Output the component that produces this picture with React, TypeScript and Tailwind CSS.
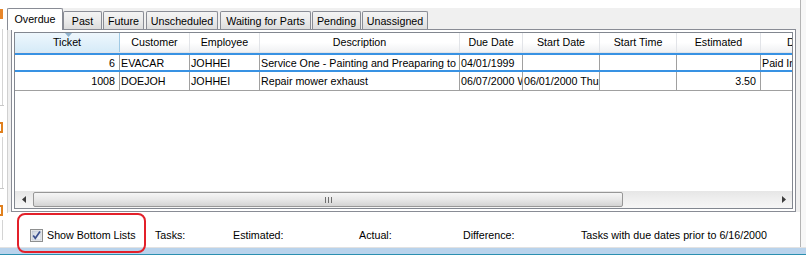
import React from "react";

type Col = { label: string; w: string; align: "left" | "right"; hdr?: string };

const cols: Col[] = [
  { label: "Ticket", w: "w-[105px]", align: "right" },
  { label: "Customer", w: "w-[70px]", align: "left" },
  { label: "Employee", w: "w-[70px]", align: "left" },
  { label: "Description", w: "w-[200px]", align: "left" },
  { label: "Due Date", w: "w-[63px]", align: "left" },
  { label: "Start Date", w: "w-[77px]", align: "left" },
  { label: "Start Time", w: "w-[77px]", align: "left" },
  { label: "Estimated", w: "w-[84px]", align: "right" },
  { label: "Difference", w: "w-[120px]", align: "left" },
];

const rows: string[][] = [
  ["6", "EVACAR", "JOHHEI", "Service One - Painting and Preaparing to paint", "04/01/1999", "", "", "", "Paid In Full"],
  ["1008", "DOEJOH", "JOHHEI", "Repair mower exhaust", "06/07/2000 Wednesday", "06/01/2000 Thursday", "", "3.50", ""],
];

const tabs = [
  { label: "Past", cls: "w-[39px] ml-0" },
  { label: "Future", cls: "w-[41px] ml-[1px]" },
  { label: "Unscheduled", cls: "w-[72px] ml-[2px]" },
  { label: "Waiting for Parts", cls: "w-[91px] ml-[2px]" },
  { label: "Pending", cls: "w-[49px] ml-[1px]" },
  { label: "Unassigned", cls: "w-[66px] ml-[1px]" },
];

function Checkbox() {
  return (
    <svg width="13" height="13" viewBox="0 0 13 13" className="shrink-0">
      <defs>
        <linearGradient id="cbg" x1="0" y1="0" x2="1" y2="1">
          <stop offset="0" stopColor="#cbd3de" />
          <stop offset="1" stopColor="#f4f6f9" />
        </linearGradient>
      </defs>
      <rect x="0.5" y="0.5" width="12" height="12" fill="#f4f4f4" stroke="#8e8f8f" />
      <rect x="2" y="2" width="9" height="9" fill="url(#cbg)" stroke="#b4bcc8" strokeWidth="0.6" />
      <path d="M3.2 6.4 L5.3 9.2 L10 2.6" fill="none" stroke="#3a4f8e" strokeWidth="1.7" />
    </svg>
  );
}

export default function App() {
  return (
    <div className="relative w-[806px] h-[262px] bg-white overflow-hidden font-['Liberation_Sans',Arial,sans-serif] text-[10.7px] text-black leading-none">
      <div className="flex h-[247px]">
        {/* left strip */}
        <div className="w-[7px] shrink-0 flex flex-col bg-white">
          <div className="h-[9px]" />
          <div className="h-[10px] w-[3px] bg-[#e8862a]" />
          <div className="mt-[10px] ml-[2px] h-[76px] w-[1px] bg-[#d4d4d4]" />
          <div className="h-[1px] w-[4px] bg-[#c8c8c8]" />
          <div className="mt-[16px] h-[11px] w-[3px] border-y-2 border-r-2 border-[#e0801e]" />
          <div className="mt-[4px] ml-[2px] h-[51px] w-[1px] bg-[#d4d4d4]" />
          <div className="h-[1px] w-[4px] bg-[#c8c8c8]" />
          <div className="mt-[16px] h-[11px] w-[3px] border-y-2 border-r-2 border-[#e0801e]" />
          <div className="mt-[4px] ml-[2px] h-[20px] w-[1px] bg-[#d4d4d4]" />
        </div>

        {/* main */}
        <div className="w-[793px] shrink-0 flex flex-col">
          <div className="h-[8px] bg-white" />
          <div className="bg-[#f0f0f0] border-l border-[#d0d0d0] flex flex-col">
            {/* tabs */}
            <div className="h-[21px] flex items-end -ml-[1px]">
              <div className="relative z-10 w-[56px] h-[22px] -mb-[1px] bg-white border border-b-0 border-[#898c95] rounded-t-[2px] flex items-start justify-center pt-[5px]">
                Overdue
              </div>
              {tabs.map((t) => (
                <div
                  key={t.label}
                  className={`${t.cls} h-[18px] border border-b-0 border-[#898c95] rounded-t-[2px] bg-gradient-to-b from-[#f4f4f4] via-[#ebebeb] to-[#dcdcdc] flex items-center justify-center pt-[1px] whitespace-nowrap`}
                >
                  {t.label}
                </div>
              ))}
            </div>
            {/* panel */}
            <div className="ml-[3px] w-[785px] h-[183px] border border-[#898c95] bg-white p-[2px] flex">
              <div className="flex-1 border border-[#828790] bg-white flex flex-col overflow-hidden">
                {/* header */}
                <div className="h-[20px] flex shrink-0 border-b border-[#e2e4e8] overflow-hidden">
                  {cols.map((c, i) =>
                    i === 0 ? (
                      <div
                        key={c.label}
                        className={`${c.w} relative shrink-0 h-full flex items-center justify-center border-r border-[#9fc9e4] bg-gradient-to-b from-[#eef7fd] to-[#d6ebf8]`}
                      >
                        <svg width="7" height="4" viewBox="0 0 7 4" className="absolute top-0 left-[50px]">
                          <path d="M0 0 H7 L3.5 4 Z" fill="#8fb1cc" />
                        </svg>
                        {c.label}
                      </div>
                    ) : i === cols.length - 1 ? (
                      <div key={c.label} className={`${c.w} shrink-0 h-full flex items-center pl-[26px] bg-gradient-to-b from-white via-white to-[#f0f1f3] overflow-hidden whitespace-nowrap`}>
                        {c.label}
                      </div>
                    ) : (
                      <div
                        key={c.label}
                        className={`${c.w} shrink-0 h-full flex items-center justify-center border-r border-[#e2e4e8] bg-gradient-to-b from-white via-white to-[#f0f1f3] whitespace-nowrap`}
                      >
                        {c.label}
                      </div>
                    )
                  )}
                </div>
                {/* rows */}
                {rows.map((r, ri) => (
                  <div
                    key={ri}
                    className={`flex shrink-0 h-[19px] ${ri === 0 ? "border-y-2 border-[#3892e3]" : "border-b border-[#a0a0a0]"}`}
                  >
                    {cols.map((c, ci) => (
                      <div
                        key={ci}
                        className={`${c.w} shrink-0 h-full overflow-hidden whitespace-nowrap flex items-center pt-[1px] ${
                          ci === cols.length - 1 ? "" : "border-r border-[#a0a0a0]"
                        } ${c.align === "right" ? "justify-end pr-[4px]" : "pl-[1px]"}`}
                      >
                        {r[ci]}
                      </div>
                    ))}
                  </div>
                ))}
                <div className="flex-1" />
                {/* scrollbar */}
                <div className="h-[17px] shrink-0 flex items-center bg-gradient-to-b from-[#e6e6e6] via-[#efefef] to-[#f6f6f6]">
                  <div className="w-[17px] h-full flex items-center justify-center shrink-0">
                    <svg width="4" height="7" viewBox="0 0 4 7">
                      <path d="M4 0 V7 L0 3.5 Z" fill="#3c3c3c" />
                    </svg>
                  </div>
                  <div className="ml-[1px] w-[590px] h-[15px] shrink-0 rounded-[2px] border border-[#979797] bg-gradient-to-b from-[#f6f6f6] via-[#e8e8e8] to-[#d3d3d3] flex items-center justify-center">
                    <div className="flex gap-[2px]">
                      <div className="w-[1px] h-[6px] bg-[#6e6e6e]" />
                      <div className="w-[1px] h-[6px] bg-[#6e6e6e]" />
                      <div className="w-[1px] h-[6px] bg-[#6e6e6e]" />
                    </div>
                  </div>
                  <div className="flex-1" />
                  <div className="w-[17px] h-full flex items-center justify-center shrink-0">
                    <svg width="4" height="7" viewBox="0 0 4 7">
                      <path d="M0 0 V7 L4 3.5 Z" fill="#3c3c3c" />
                    </svg>
                  </div>
                </div>
              </div>
            </div>
            <div className="h-[1px] bg-white" />
          </div>
          {/* bottom bar */}
          <div className="flex-1 bg-white flex items-start pt-[16px] whitespace-nowrap">
            <div className="ml-[23px] w-[125px] flex items-center gap-[4px]">
              <Checkbox />
              <span>Show Bottom Lists</span>
            </div>
            <div className="w-[78px] pt-[1px]">Tasks:</div>
            <div className="w-[126px] pt-[1px]">Estimated:</div>
            <div className="w-[104px] pt-[1px]">Actual:</div>
            <div className="w-[118px] pt-[1px]">Difference:</div>
            <div className="pt-[1px]">Tasks with due dates prior to 6/16/2000</div>
          </div>
        </div>

        {/* right edge */}
        <div className="w-[1px] bg-[#b4b4b4] shrink-0" />
        <div className="flex-1 bg-[#f7f7f7]" />
      </div>

      {/* status strip */}
      <div className="h-[1px] bg-[#e2e2e2]" />
      <div className="h-[6px] bg-[#b9d3ec]" />
      <div className="h-[1px] bg-[#2b8fb0]" />
      <div className="flex-1 bg-white" />

      {/* red annotation */}
      <div className="absolute left-[17px] top-[213px] w-[129px] h-[40px] rounded-[8px] border-[2px] border-[#e3202a]" />
    </div>
  );
}
